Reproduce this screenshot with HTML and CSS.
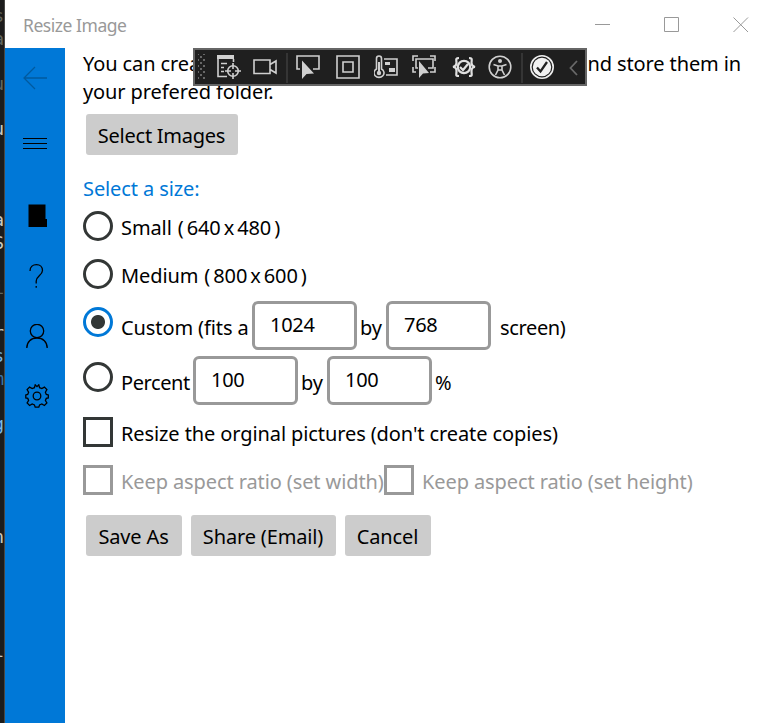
FILE: index.html
```html
<!DOCTYPE html>
<html lang="en">
<head>
<meta charset="utf-8">
<title>Resize Image</title>
<link rel="stylesheet" href="styles.css">
</head>
<body>
<div class="screen">
  <div class="editor" aria-hidden="true">
    <i class="dim">s</i><i class="dim">a</i><i></i><i class="dim">u</i><i></i><i>u</i><i></i><i></i><i></i><i>a</i><i>S</i><i></i><i class="dim">i</i><i></i><i>r</i><i class="sky">s</i><i class="blue">m</i><i></i><i class="sky">g</i><i></i><i></i><i></i><i></i><i>n</i><i></i><i></i><i></i><i></i><i>l</i>
  </div>
  <div class="window">
    <header class="titlebar">
      <span class="title">Resize Image</span>
      <div class="controls">
        <svg width="16" height="16" viewBox="0 0 16 16"><path d="M0 7.500H15"/></svg>
        <svg width="16" height="16" viewBox="0 0 16 16"><path d="M.5 .5h14v14H.5z"/></svg>
        <svg width="16" height="16" viewBox="0 0 16 16"><path d="M.5 .5l14.500 14.500M15 .5L.5 15"/></svg>
      </div>
    </header>
    <div class="body">
      <nav class="sidebar">
        <svg class="back" width="24" height="24" viewBox="0 0 24 24"><path d="M24 12H1M12 1L1 12l11 11"/></svg>
        <svg class="burger" width="24" height="24" viewBox="0 0 24 24"><path d="M0 6.500h24M0 11.500h24M0 16.500h24"/></svg>
        <svg class="doc" width="24" height="24" viewBox="0 0 24 24"><path d="M3.500 .500h17v14.500h1.500v8H3.500z" fill="#000" stroke="none"/></svg>
        <svg class="item" width="24" height="24" viewBox="0 0 24 24"><path d="M5 7C5 3 8 .7 11.500 .7S17.500 3 17.500 6.500C17.500 11 11.200 12 11.200 17v2.500M11.200 22v1.700"/></svg>
        <svg class="item" width="24" height="24" viewBox="0 0 24 24"><circle cx="12" cy="7" r="6.700"/><path d="M1.800 24C1.800 17.800 6 14 12 14s10.200 3.800 10.200 10"/></svg>
        <svg class="item" width="24" height="24" viewBox="0 0 24 24"><circle cx="12" cy="12" r="3.800"/><path d="M10.200 .8l-.8 2.900-2.200.9-2.600-1.500L2.100 5.600l1.500 2.600-.9 2.200-1.900.5v3l2 .5.8 2.100-1.500 2.500 2.500 2.500 2.600-1.500 2.200.9.800 2.300h3.600l.8-2.300 2.200-.9 2.600 1.500 2.500-2.500-1.500-2.500.9-2.100 2-.5v-3l-2-.5-.9-2.200 1.500-2.600-2.500-2.500-2.600 1.500-2.200-.9-.8-2.900-1.800 1.800z"/></svg>
      </nav>
      <main class="content">
        <div class="intro">
          <div class="split"><span>You can crea</span><span class="tail">nd store them in</span></div>
          <div class="second">your prefered folder.</div>
        </div>
        <button class="btn select">Select Images</button>
        <h2>Select a size:</h2>
        <div class="row small"><span class="radio"></span><span class="label">Small<b>(</b>640<b class="x">x</b>480<b>)</b></span></div>
        <div class="row medium"><span class="radio"></span><span class="label">Medium<b>(</b>800<b class="x">x</b>600<b>)</b></span></div>
        <div class="row fields">
          <span class="radio on"></span><span class="label custom">Custom (fits a</span><span class="box">1024</span><span class="by">by</span><span class="box">768</span><span class="label after">screen)</span>
        </div>
        <div class="row fields">
          <span class="radio"></span><span class="label percent">Percent</span><span class="box">100</span><span class="by">by</span><span class="box">100</span><span class="by">%</span>
        </div>
        <div class="row original"><span class="check"></span><span class="label">Resize the orginal pictures (don't create copies)</span></div>
        <div class="row keep"><span class="check"></span><span class="label aspect">Keep aspect ratio (set width)</span><span class="check"></span><span class="label">Keep aspect ratio (set height)</span></div>
        <div class="actions"><button class="btn save">Save As</button><button class="btn share">Share (Email)</button><button class="btn cancel">Cancel</button></div>
      </main>
    </div>
  </div>
  <div class="toolbar">
    <span class="grip"></span>
    <svg width="24" height="24" viewBox="0 0 24 24"><path d="M0 0h17v4H0z" class="f"/><path d="M1 3v18.500h9M16.500 4v3M4 8.500h6M4 12.500h3M4 16.500h3"/><circle cx="16" cy="16" r="5.300"/><path d="M16 8v6M16 18v6M8 16h6M18 16h6"/></svg>
    <svg width="24" height="24" viewBox="0 0 24 24"><path d="M1 5h16v13.500H1zM17 9.500L23 6v12l-6-3.500"/></svg>
    <span class="sep"></span>
    <svg class="pick" width="24" height="24" viewBox="0 0 24 24"><path d="M4 14H1V1h22v13h-6"/><path d="M6 5.500V24l4.500-5 7.500-.5z" class="f"/></svg>
    <svg class="frame" width="24" height="24" viewBox="0 0 24 24"><path d="M1 1h22v22H1z"/><path d="M7 7h10v10H7z"/></svg>
    <svg class="thermo" width="24" height="24" viewBox="0 0 24 24"><path d="M2.500 14V3.500a2.500 2.500 0 0 1 5 0V14a5 4.500 0 1 1-5 0z"/><path d="M5 7v11" stroke-width="2"/><circle cx="5" cy="18" r="2.200" class="f"/><path d="M10 4h13v16H12"/><path d="M11 7h5v3h-5zM15 13h6v4h-6z" class="f"/></svg>
    <svg width="24" height="24" viewBox="0 0 24 24"><path d="M1 6V1h5M18 1h5v5M1 12v5h3M23 12v5h-5M6 13H4V4h17v9h-5"/><path d="M7 6v17l4-4.500 6-.5z" class="f"/></svg>
    <svg class="braces" width="24" height="24" viewBox="0 0 24 24"><path d="M7 3C3 3 4.500 5 4.500 8S1 12 1 12s3.500 0 3.500 4S3 21 7 21M17 3c4 0 2.500 2 2.500 5s3.500 4 3.500 4-3.500 0-3.500 4 1.500 5-2.500 5"/><circle cx="12" cy="12" r="6.200"/><path d="M8 12l3 3 5-6"/></svg>
    <svg width="24" height="24" viewBox="0 0 24 24"><circle cx="12" cy="12" r="10.800"/><circle cx="12" cy="6" r="2" class="f"/><path d="M5.500 9.500l4.500 1.500h4l4.500-1.500M10 11v4l-2.500 5M14 11v4l2.500 5M10 15h4"/></svg>
    <span class="sep"></span>
    <svg class="done" width="24" height="24" viewBox="0 0 24 24"><circle cx="12" cy="12" r="11.200" stroke="#eee"/><circle cx="12" cy="12" r="9.200" fill="#f2f2f2" stroke="none"/><path d="M7 12.500l3.500 4L17 7" stroke="#222" stroke-width="2.300"/></svg>
    <svg class="chev" width="9" height="24" viewBox="0 0 9 24"><path d="M8 6L1.500 13 8 20" stroke="#696969" stroke-width="1.800"/></svg>
  </div>
</div>
</body>
</html>
```

FILE: styles.css
```css
* { box-sizing: border-box; }
body { margin: 0; background: #fff; font-family: "Noto Sans", sans-serif; font-size: 20px; line-height: 28px; letter-spacing: -0.1px; color: #000; }
svg { display: block; flex: none; fill: none; }
.screen { position: relative; display: flex; width: 774px; height: 723px; overflow: hidden; }

.editor { flex: none; width: 5px; height: 723px; background: #1c1c1c; border-right: 1px solid #494845; overflow: hidden; padding-top: 5px; }
.editor i { display: flex; justify-content: flex-end; height: 22.68px; font: 18px/22.68px "DejaVu Sans Mono", monospace; letter-spacing: 0; color: #c9c9c0; }
.editor .dim { color: #62665e; }
.editor .sky { color: #7ab8e8; }
.editor .blue { color: #3c75a5; }

.window { flex: 1; min-width: 0; }
.titlebar { display: flex; justify-content: space-between; height: 48px; padding-left: 18px; }
.title { font-size: 17.5px; line-height: 50px; letter-spacing: -0.46px; color: #999; }
.controls { display: flex; gap: 53px; padding: 17px 25px 0 0; }
.controls svg { stroke: #999; }
.body { display: flex; height: 675px; }

.sidebar { flex: none; width: 60px; padding: 18px 0 0 18px; background: #0078d7; }
.sidebar svg { stroke: #000; stroke-width: 1.3; }
.sidebar .back { stroke: #005a9f; }
.sidebar .burger { margin-top: 42px; stroke-width: 1; }
.sidebar .doc { margin: 48px 0 0 2px; }
.sidebar .item { margin: 36px 0 0 2px; }

.content { flex: 1; padding: 2px 0 0 18px; white-space: nowrap; }
.intro { height: 64px; }
.split { display: flex; justify-content: space-between; padding-right: 33px; }
.tail { letter-spacing: -0.12px; }
.btn { display: block; flex: none; height: 41px; padding: 3px 1px 0 0; border: 0; border-radius: 3px; background: #ccc; color: #000; font: inherit; letter-spacing: -0.15px; text-align: center; }
.select { width: 152px; margin-left: 3px; letter-spacing: -0.25px; }
h2 { margin: 20px 0 8px; font-size: 20px; line-height: 28px; font-weight: 400; color: #0078d7; }
.row { display: flex; align-items: flex-start; }
.radio, .check { flex: none; width: 30px; height: 30px; border: 3px solid #333736; }
.radio { border-radius: 50%; }
.radio.on { border-color: #0078d7; background: radial-gradient(circle, #333736 6.500px, #fff 7.500px); }
.label { padding: 3px 0 0 8px; }
.label b { font-weight: 400; margin: 0 3px 0 6px; }
.label .x { margin: 0 3px; }
.label b:last-child { margin: 0 0 0 3px; }
.small { height: 48px; }
.medium { height: 42px; }
.fields { height: 55px; }
.fields .radio { margin-top: 6px; }
.fields .label, .by { padding-top: 13px; }
.custom { width: 139px; }
.fields .percent { width: 80px; letter-spacing: -0.4px; }
.box { flex: none; width: 105px; height: 49px; padding: 7px 0 0 15px; border: 3px solid #999; border-radius: 6px; letter-spacing: -0.3px; }
.by { width: 29px; padding-left: 3px; }
.fields .after { padding-left: 9px; letter-spacing: -0.35px; }
.original { height: 54px; padding-top: 6px; }
.keep { height: 50px; color: #999; }
.keep .check { border-color: #999; }
.aspect { width: 271px; }
.actions { display: flex; gap: 9px; padding-left: 3px; }
.save { width: 96px; }
.share { width: 145px; }
.cancel { width: 86px; }

.toolbar { position: absolute; left: 193px; top: 48px; display: flex; gap: 12px; width: 394px; height: 38px; padding: 5px 0 0 3px; background: #1f1f1f; border: 2px solid #666; }
.toolbar svg { stroke: #d0d0d0; stroke-width: 1.6; }
.toolbar .f { fill: #d0d0d0; stroke: none; }
.grip { width: 8px; height: 26px; margin: -1px -1px 0 0; background-image: radial-gradient(circle, #686868 .8px, transparent 1.1px), radial-gradient(circle, #686868 .8px, transparent 1.1px); background-size: 6px 6px; background-position: 0 0, 3px 3px; }
.sep { width: 2px; height: 30px; margin: -2px -3px 0; background: #353535; }
.pick { margin-left: -1px; }
.frame { margin-left: 4px; }
.thermo { margin: 0 2px 0 2px; }
.braces { margin-left: 4px; }
.braces path, .braces circle { stroke: #e0e0e0; stroke-width: 2.2; }
.done { margin-left: -2px; }
.chev { margin-left: 3px; }
```
